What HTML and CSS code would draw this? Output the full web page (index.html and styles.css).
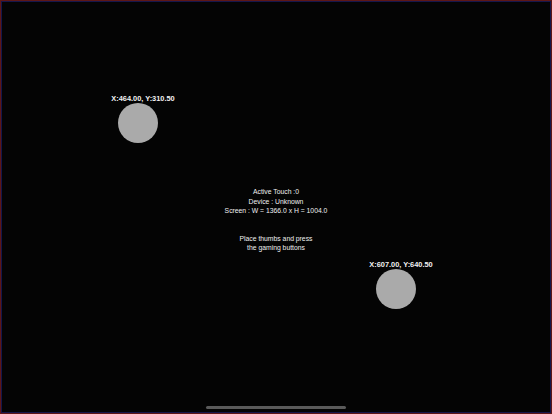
FILE: index.html
```html
<!DOCTYPE html>
<html>
<head>
<meta charset="utf-8">
<link rel="stylesheet" href="styles.css">
</head>
<body>
<div class="screen">
  <div class="touch touch-a">
    <div class="touch-label">X:464.00, Y:310.50</div>
    <div class="touch-dot"></div>
  </div>
  <div class="touch touch-b">
    <div class="touch-label">X:607.00, Y:640.50</div>
    <div class="touch-dot"></div>
  </div>
  <div class="info">
    <div class="info-stats">
      <p>Active Touch :0</p>
      <p>Device : Unknown</p>
      <p>Screen : W = 1366.0 x H = 1004.0</p>
    </div>
    <div class="info-hint">
      <p>Place thumbs and press</p>
      <p>the gaming buttons</p>
    </div>
  </div>
  <div class="home-indicator"></div>
</div>
</body>
</html>
```
FILE: styles.css
```css
html, body {
  margin: 0;
  padding: 0;
  background: #000;
}
.screen {
  position: relative;
  width: 552px;
  height: 414px;
  box-sizing: border-box;
  border: 1px solid #5e1616;
  box-shadow: inset 0 0 0 1px #16164a;
  background: #040404;
  display: flex;
  flex-direction: column;
  align-items: center;
  font-family: "Liberation Sans", Arial, sans-serif;
  color: #fff;
  overflow: hidden;
}
.touch {
  position: absolute;
  display: flex;
  flex-direction: column;
  align-items: center;
  width: 100px;
}
.touch-a { left: 87px; top: 93px; }
.touch-b { left: 345px; top: 259px; }
.touch-label {
  margin-left: 10px;
  font-size: 7.4px;
  font-weight: bold;
  line-height: 9px;
  white-space: nowrap;
  color: #f2f2f2;
}
.touch-dot {
  width: 40px;
  height: 40px;
  border-radius: 50%;
  background: #aaaaaa;
}
.info {
  margin-top: 186px;
  display: flex;
  flex-direction: column;
  align-items: center;
  gap: 18px;
  font-size: 6.8px;
  line-height: 9.5px;
  color: #f0f0f0;
  text-align: center;
}
.info p { margin: 0; }
.home-indicator {
  margin-top: auto;
  margin-bottom: 4px;
  width: 140px;
  height: 3px;
  border-radius: 2px;
  background: #5a5a5a;
}
```
